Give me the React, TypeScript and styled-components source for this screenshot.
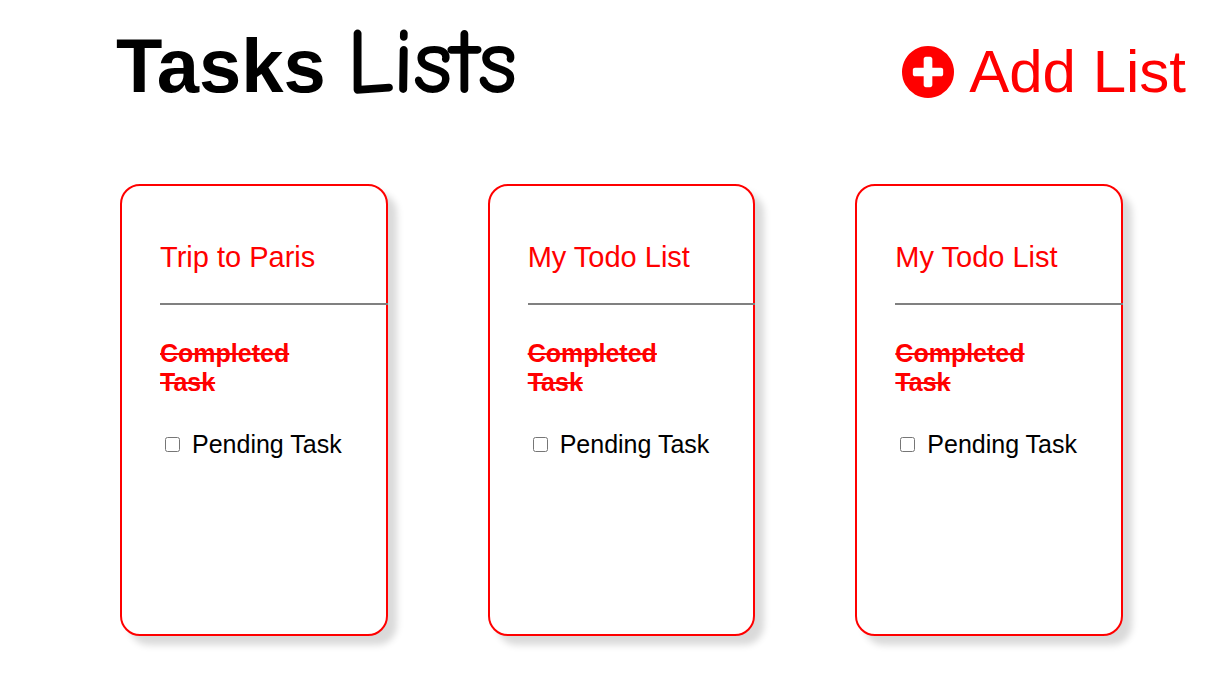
import React, { useId } from "react";
import styled, { createGlobalStyle } from "styled-components";

const GlobalStyle = createGlobalStyle`
  *, *::before, *::after { box-sizing: border-box; }
  body {
    margin: 0;
    background: #fff;
    color: #000;
    font-family: Arial, "Liberation Sans", sans-serif;
  }
`;

const Header = styled.header`
  display: flex;
  align-items: flex-end;
  justify-content: space-between;
  padding: 22px 24px 0 116px;
`;

const Title = styled.h1`
  margin: 0;
  font-size: 76px;
  line-height: 88px;
  font-weight: 700;
`;

const Script = styled.span`
  font-family: "Comic Neue", "Comic Sans MS", cursive;
  font-size: 92px;
  font-weight: 400;
  line-height: 1px;
  -webkit-text-stroke: 2px currentColor;
`;

const AddButton = styled.button`
  display: flex;
  align-items: center;
  gap: 15px;
  padding: 0;
  border: 0;
  background: none;
  color: red;
  font: inherit;
  font-size: 60px;
  line-height: 76px;
  white-space: nowrap;
  cursor: pointer;
`;

const PlusIcon = styled.svg`
  width: 52px;
  height: 52px;
  fill: currentColor;
`;

const Board = styled.main`
  display: grid;
  grid-template-columns: repeat(3, minmax(0, 1fr));
  gap: 100px;
  padding: 74px 87px 40px 120px;
`;

const Card = styled.section`
  min-height: 452px;
  padding: 54px 38px;
  border: 2px solid red;
  border-radius: 20px;
  background: #fff;
  box-shadow: 9px 9px 7px rgba(0, 0, 0, 0.15);
`;

const CardTitle = styled.h2`
  margin: 0;
  color: red;
  font-size: 29px;
  line-height: 34px;
  font-weight: 400;
`;

const Divider = styled.hr`
  height: 2px;
  margin: 29px -40px 34px 0;
  border: 0;
  background: gray;
`;

const Completed = styled.p`
  margin: 0 0 33px;
  color: red;
  font-size: 25px;
  line-height: 29px;
  font-weight: 700;
  text-decoration: line-through;
`;

const Pending = styled.div`
  display: flex;
  align-items: center;
  gap: 12px;
  font-size: 25px;
  line-height: 29px;
  white-space: nowrap;
`;

const Checkbox = styled.input`
  width: 15px;
  height: 15px;
  margin: 0 0 0 5px;
`;

function TaskCard({ title }: { title: string }) {
  const id = useId();
  return (
    <Card>
      <CardTitle>{title}</CardTitle>
      <Divider />
      <Completed>Completed Task</Completed>
      <Pending>
        <Checkbox type="checkbox" id={id} />
        <label htmlFor={id}>Pending Task</label>
      </Pending>
    </Card>
  );
}

const lists = [
  { id: 1, title: "Trip to Paris" },
  { id: 2, title: "My Todo List" },
  { id: 3, title: "My Todo List" },
];

export default function App() {
  return (
    <>
      <GlobalStyle />
      <Header>
        <Title>
          Tasks <Script>Lists</Script>
        </Title>
        <AddButton type="button">
          <PlusIcon viewBox="128 128 1536 1536" aria-hidden="true">
            <path d="M1344 960v-128q0-26-19-45t-45-19h-256v-256q0-26-19-45t-45-19h-128q-26 0-45 19t-19 45v256h-256q-26 0-45 19t-19 45v128q0 26 19 45t45 19h256v256q0 26 19 45t45 19h128q26 0 45-19t19-45v-256h256q26 0 45-19t19-45zm320-64q0 209-103 385.5t-279.5 279.5-385.5 103-385.5-103-279.5-279.5-103-385.5 103-385.5 279.5-279.5 385.5-103 385.5 103 279.5 279.5 103 385.5z" />
          </PlusIcon>
          <span>Add List</span>
        </AddButton>
      </Header>
      <Board>
        {lists.map((list) => (
          <TaskCard key={list.id} title={list.title} />
        ))}
      </Board>
    </>
  );
}
